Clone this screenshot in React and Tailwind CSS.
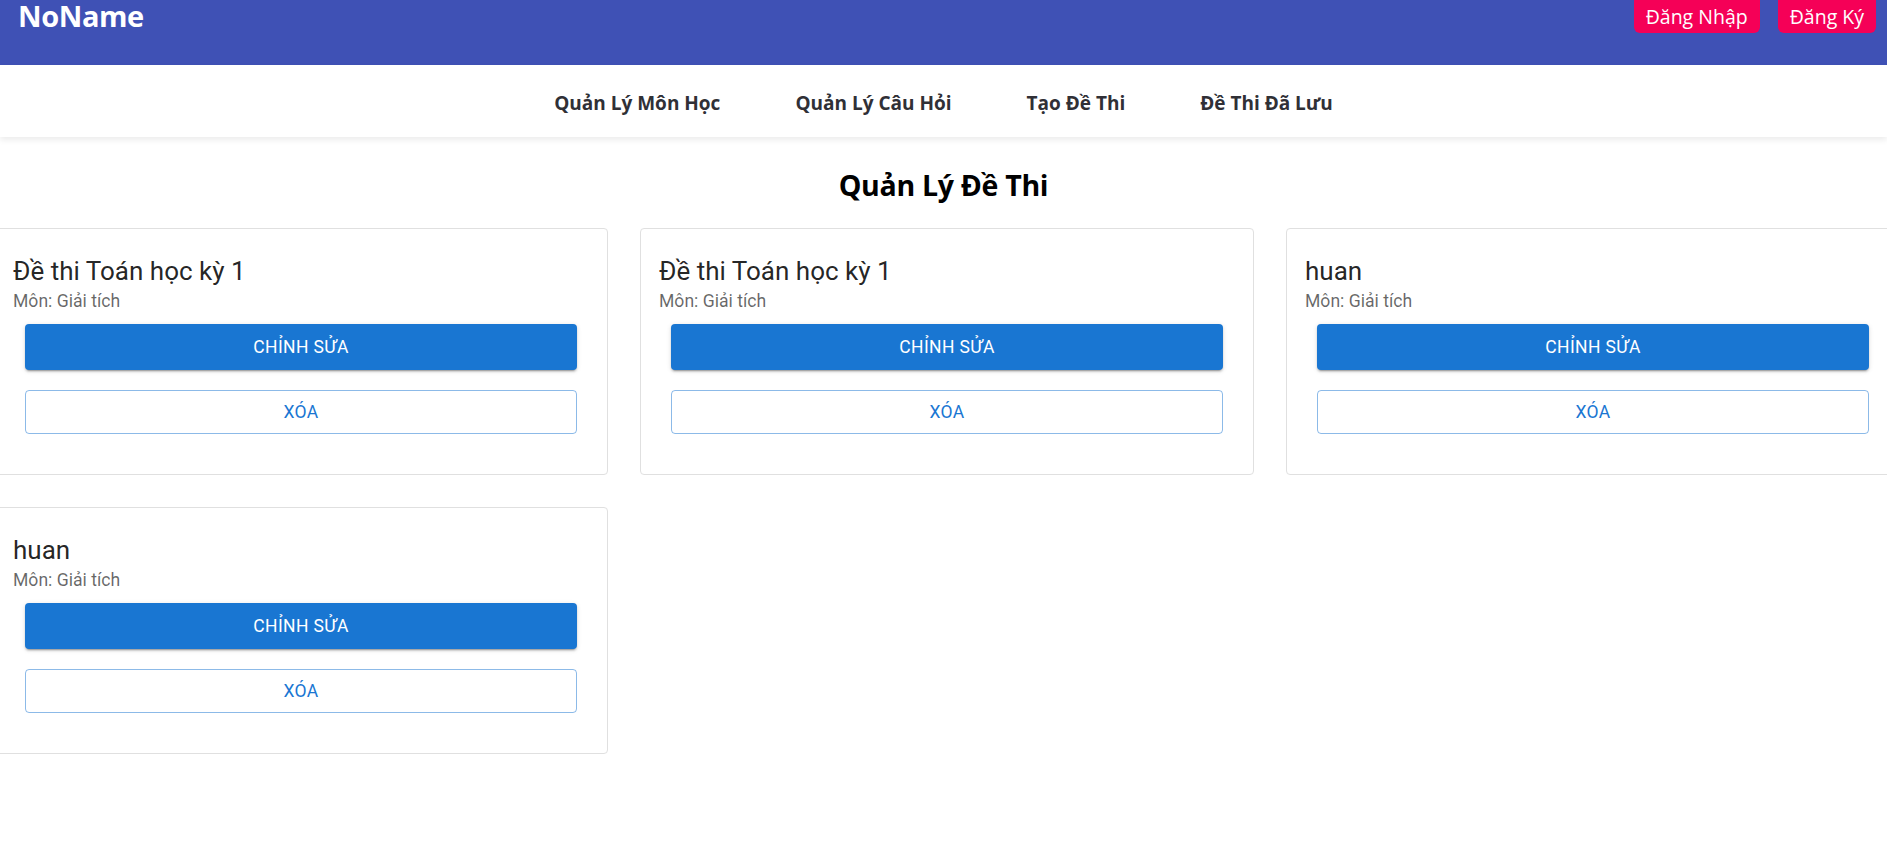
import React from 'react';

const exams = [
  { id: 1, title: 'Đề thi Toán học kỳ 1', subject: 'Giải tích' },
  { id: 2, title: 'Đề thi Toán học kỳ 1', subject: 'Giải tích' },
  { id: 3, title: 'huan', subject: 'Giải tích' },
  { id: 4, title: 'huan', subject: 'Giải tích' },
];

const navItems = ['Quản Lý Môn Học', 'Quản Lý Câu Hỏi', 'Tạo Đề Thi', 'Đề Thi Đã Lưu'];

function ExamCard({ exam }) {
  return (
    <div className="h-[247px] border border-[#e0e0e0] rounded-[4px] bg-white px-[18px] pt-[25px]">
      <h3 className="text-[26px] leading-[34px] text-[rgba(0,0,0,0.87)]">{exam.title}</h3>
      <p className="text-[17.6px] leading-[26px] text-[rgba(0,0,0,0.6)]">Môn: {exam.subject}</p>
      <div className="mx-[12px] mt-[10px] flex flex-col gap-[20px]">
        <button className="h-[46px] rounded-[4px] bg-[#1976d2] text-white text-[17.5px] uppercase tracking-[0.4px] shadow-[0_3px_1px_-2px_rgba(0,0,0,0.2),0_2px_2px_0_rgba(0,0,0,0.14),0_1px_5px_0_rgba(0,0,0,0.12)]">
          Chỉnh sửa
        </button>
        <button className="h-[44px] rounded-[4px] border border-[rgba(25,118,210,0.5)] text-[#1976d2] text-[17.5px] uppercase tracking-[0.4px]">
          Xóa
        </button>
      </div>
    </div>
  );
}

export default function App() {
  return (
    <div className="min-h-screen bg-white overflow-hidden font-['Roboto',sans-serif]">
      {/* Top bar */}
      <header className="h-[65px] bg-[#3f51b5] flex justify-between items-start pl-[18px] pr-[11px]">
        <div className="text-white font-bold text-[29px] leading-[32px] font-['Open_Sans',sans-serif] tracking-[-0.4px]">
          NoName
        </div>
        <div className="flex gap-[18px] font-['Open_Sans',sans-serif]">
          <button className="h-[33px] px-[12px] bg-[#f50057] text-white text-[19.5px] leading-none rounded-b-[6px]">Đăng Nhập</button>
          <button className="h-[33px] px-[12px] bg-[#f50057] text-white text-[19.5px] leading-none rounded-b-[6px]">Đăng Ký</button>
        </div>
      </header>

      {/* Nav */}
      <nav className="h-[72px] pt-[4px] bg-white shadow-[0_3px_6px_rgba(0,0,0,0.08)] flex justify-center items-center gap-[75px] font-['Open_Sans',sans-serif]">
        {navItems.map(item => (
          <a key={item} className="text-[19px] font-bold text-[#303036]">{item}</a>
        ))}
      </nav>

      <h1 className="mt-[32px] text-center text-[28.5px] leading-8 font-bold text-black font-['Open_Sans',sans-serif] tracking-[-0.3px]">
        Quản Lý Đề Thi
      </h1>

      <div className="ml-[-6px] w-[1906px] mt-[27px] grid grid-cols-[repeat(3,614px)] gap-8">
        {exams.map(exam => (
          <ExamCard key={exam.id} exam={exam} />
        ))}
      </div>
    </div>
  );
}
